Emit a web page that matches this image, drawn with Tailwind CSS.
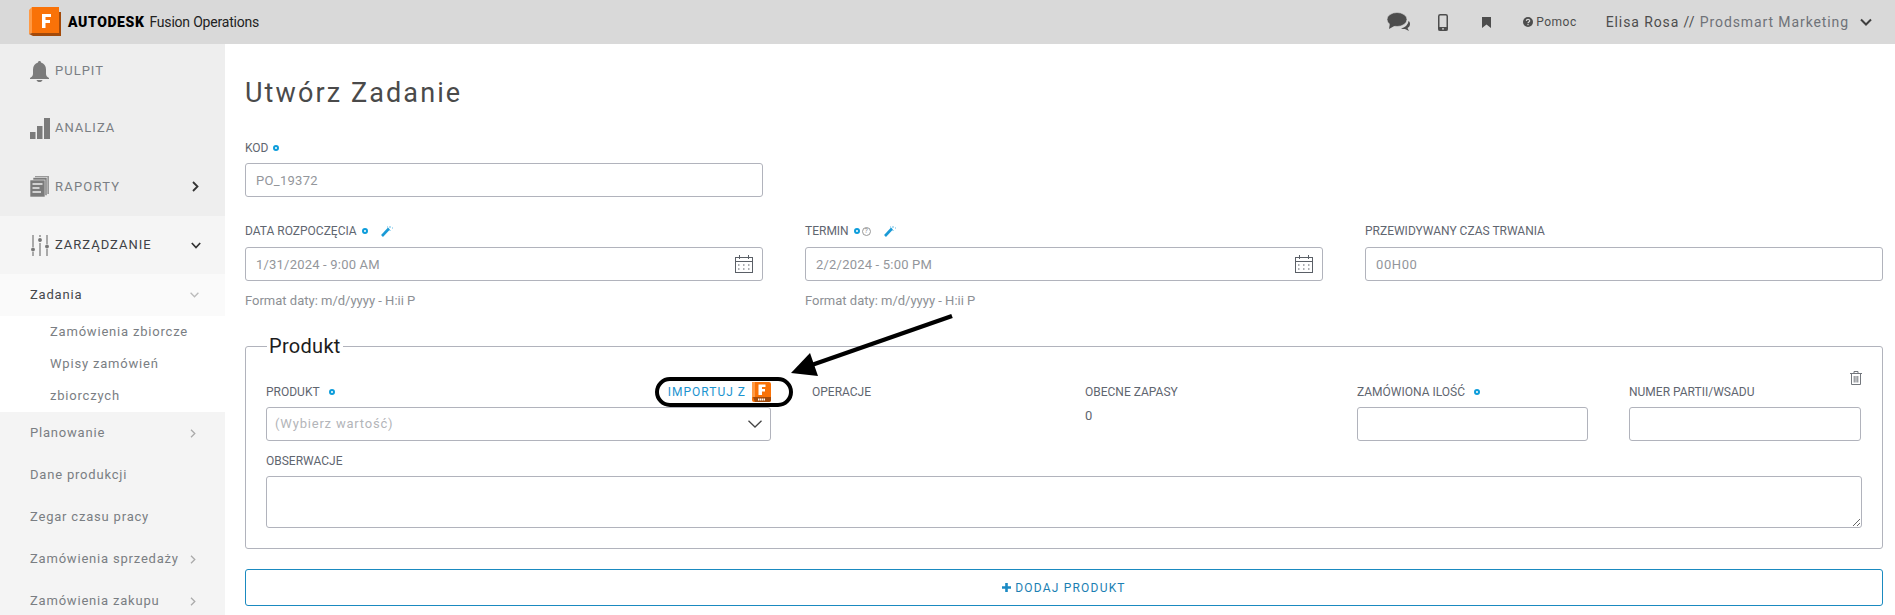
<!DOCTYPE html>
<html lang="pl">
<head>
    <meta charset="UTF-8">
    <title>Utwórz Zadanie</title>
    <script src="https://cdn.jsdelivr.net/npm/@tailwindcss/browser@4"></script>
</head>
<body class="relative h-[615px] overflow-hidden bg-white font-['Roboto',sans-serif] text-[#5f6670]">
    <!-- Top bar -->
    <header class="flex h-[44px] items-center bg-[#d9d9d9] pl-[29px] pr-[23px]">
        <svg class="h-[30px] w-[33px]" viewBox="0 0 33 30">
            <path d="M0 3 L3 0 L3 26 L0 27 Z" fill="#ff9a45"/>
            <path d="M0 27 L3 26 L32 26 L32 29 L4 29 Z" fill="#a34a0a"/>
            <rect x="3" y="0" width="27" height="26" fill="#f97208"/>
            <rect x="30" y="5" width="2" height="22" fill="#a34a0a"/>
            <path d="M13 7 H22 V10 H16.5 V13 H21 V16 H16.5 V21 H13 Z" fill="#fff"/>
        </svg>
        <span class="ml-[6px] text-[14px] font-black leading-none tracking-[0.6px] text-black">AUTODESK</span>
        <span class="ml-[5px] text-[14px] leading-none text-[#222] tracking-[-0.2px]">Fusion Operations</span>
        <div class="ml-auto flex items-center">
            <svg class="h-[20px] w-[24px]" viewBox="0 0 24 20" fill="#4d4d4d">
                <path d="M23 12c0 2-1 3-2.500 4l1.500 3-4-2c-1 0-3 0-4-.5 4-1 7-3.500 7.500-7.500 1 .5 1.500 1.800 1.500 3z"/>
                <ellipse cx="10" cy="7.500" rx="10" ry="7" stroke="#d9d9d9" stroke-width="0.600"/>
                <path d="M3 11 L2 17 L9 13 Z"/>
            </svg>
            <svg class="ml-[27px] h-[17px] w-[10px]" viewBox="0 0 10 17">
                <rect x="0.750" y="0.750" width="8.500" height="15.500" rx="1.500" fill="none" stroke="#4d4d4d" stroke-width="1.500"/>
                <rect x="0.500" y="13" width="9" height="3.500" fill="#4d4d4d"/>
                <circle cx="5" cy="14.800" r="0.900" fill="#d9d9d9"/>
            </svg>
            <svg class="ml-[34px] h-[11px] w-[9px]" viewBox="0 0 9 11" fill="#4d4d4d"><path d="M0 0H9V11L4.500 7.500 0 11Z"/></svg>
            <svg class="ml-[32px] h-[10px] w-[10px]" viewBox="0 0 10 10">
                <circle cx="5" cy="5" r="5" fill="#4d4d4d"/>
                <path d="M3.300 3.900C3.400 2 6.700 2 6.700 3.800 6.700 5 5 5 5 6.200" fill="none" stroke="#d9d9d9" stroke-width="1.200"/>
                <rect x="4.400" y="7" width="1.200" height="1.200" fill="#d9d9d9"/>
            </svg>
            <span class="ml-[3px] text-[12px] tracking-[0.5px] text-[#4d4d4d]">Pomoc</span>
            <span class="ml-[29px] text-[14px] tracking-[0.9px] text-[#4d4d4d]">Elisa Rosa // <span class="text-[#6f7278]">Prodsmart Marketing</span></span>
            <svg class="ml-[11px] h-[8px] w-[12px]" viewBox="0 0 12 8" fill="none" stroke="#3f3f3f" stroke-width="2"><path d="M1 1.500 6 6.500 11 1.500"/></svg>
        </div>
    </header>

    <div class="flex h-[571px]">
        <!-- Sidebar -->
        <nav class="w-[225px] shrink-0 bg-[#f4f4f4] text-[13px] tracking-[0.8px]">
            <div class="bg-[#eeeeee] text-[#7a7e83]">
                <a class="flex h-[54px] items-center pl-[30px] tracking-[1px]">
                    <svg class="h-[21px] w-[19px]" viewBox="0 0 19 21" fill="#7b7b7b">
                        <path d="M9.500 0C10.500 0 11 .6 11 1.500 14 2.300 16 5 16 8.500V13C16 15 17.500 16 19 17V18H0V17C1.500 16 3 15 3 13V8.500C3 5 5 2.300 8 1.500 8 .6 8.500 0 9.500 0Z"/>
                        <path d="M6.500 19H12.500C12 20.500 11 21 9.500 21S7 20.500 6.500 19Z"/>
                    </svg>
                    <span class="ml-[6px]">PULPIT</span>
                </a>
                <a class="flex h-[60px] items-center pl-[30px] tracking-[1px]">
                    <svg class="h-[21px] w-[20px]" viewBox="0 0 20 21" fill="#7b7b7b">
                        <rect x="0" y="14" width="5.500" height="7"/><rect x="7" y="8" width="5.500" height="13"/><rect x="14" y="0" width="6" height="21"/>
                    </svg>
                    <span class="ml-[5px]">ANALIZA</span>
                </a>
                <a class="flex h-[58px] items-center pb-[1px] pl-[30px] pr-[26px] tracking-[1.2px]">
                    <svg class="h-[21px] w-[19px]" viewBox="0 0 19 21">
                        <rect x="5" y="0" width="14" height="18" fill="#999"/>
                        <rect x="3" y="1.500" width="14" height="18" fill="#7b7b7b" stroke="#eee" stroke-width="0.600"/>
                        <rect x="0" y="4" width="15" height="17" fill="#7b7b7b" stroke="#eee" stroke-width="0.600"/>
                        <path d="M2.500 8H12.500M2.500 12H9.500M2.500 16H11" stroke="#eee" stroke-width="1.400"/>
                    </svg>
                    <span class="ml-[6px]">RAPORTY</span>
                    <svg class="ml-auto h-[11px] w-[7px]" viewBox="0 0 7 11" fill="none" stroke="#333" stroke-width="1.800"><path d="M1 1 5.500 5.500 1 10"/></svg>
                </a>
            </div>
            <a class="flex h-[58px] items-center bg-[#f5f5f5] pl-[31px] pr-[24px] text-[#3f4246] tracking-[1px]">
                <svg class="h-[21px] w-[18px]" viewBox="0 0 18 21" stroke="#777" stroke-width="1.200" fill="#777">
                    <path d="M2 0V12M2 17V21M9 0V2M9 8V21M16 0V9M16 14V21"/>
                    <circle cx="2" cy="14.500" r="1.300"/><circle cx="9" cy="5" r="1.300"/><circle cx="16" cy="11.500" r="1.300"/>
                </svg>
                <span class="ml-[6px]">ZARZĄDZANIE</span>
                <svg class="ml-auto h-[7px] w-[10px]" viewBox="0 0 10 7" fill="none" stroke="#333" stroke-width="1.700"><path d="M.8 1 5 5.500 9.200 1"/></svg>
            </a>
            <a class="flex h-[42px] items-center bg-[#fafafa] pl-[30px] pr-[26px] text-[#45484c]">
                <span>Zadania</span>
                <svg class="ml-auto h-[6px] w-[9px]" viewBox="0 0 9 6" fill="none" stroke="#bbb" stroke-width="1.300"><path d="M.6.8 4.500 4.800 8.400.8"/></svg>
            </a>
            <div class="bg-white pl-[50px] text-[#7a7e83]">
                <a class="flex h-[32px] items-center">Zamówienia zbiorcze</a>
                <a class="flex h-[32px] items-center">Wpisy zamówień</a>
                <a class="flex h-[32px] items-center">zbiorczych</a>
            </div>
            <div class="text-[#7a7e83]">
                <a class="flex h-[42px] items-center pl-[30px] pr-[29px]">Planowanie
                    <svg class="ml-auto h-[9px] w-[6px]" viewBox="0 0 6 9" fill="none" stroke="#aaa" stroke-width="1.300"><path d="M1 .7 4.800 4.500 1 8.300"/></svg>
                </a>
                <a class="flex h-[42px] items-center pl-[30px]">Dane produkcji</a>
                <a class="flex h-[42px] items-center pl-[30px]">Zegar czasu pracy</a>
                <a class="flex h-[42px] items-center pl-[30px] pr-[29px]">Zamówienia sprzedaży
                    <svg class="ml-auto h-[9px] w-[6px]" viewBox="0 0 6 9" fill="none" stroke="#aaa" stroke-width="1.300"><path d="M1 .7 4.800 4.500 1 8.300"/></svg>
                </a>
                <a class="flex h-[42px] items-center pl-[30px] pr-[29px]">Zamówienia zakupu
                    <svg class="ml-auto h-[9px] w-[6px]" viewBox="0 0 6 9" fill="none" stroke="#aaa" stroke-width="1.300"><path d="M1 .7 4.800 4.500 1 8.300"/></svg>
                </a>
            </div>
        </nav>

        <!-- Main -->
        <main class="flex-1 pl-[20px] pr-[12px]">
            <h1 class="mt-[31px] h-[36px] text-[27px] leading-[36px] tracking-[2.1px] text-[#4a4a4a]">Utwórz Zadanie</h1>

            <label class="mt-[29px] flex h-[16px] items-center text-[12px] text-[#5f6670]">KOD
                <span class="ml-[5px] h-[6px] w-[6px] rounded-full border-[2px] border-[#0d9ddb]"></span>
            </label>
            <input value="PO_19372" class="mt-[7px] block h-[34px] w-[518px] rounded-[3px] border border-[#b1b3bc] px-[10px] text-[13px] tracking-[0.3px] text-[#93969b] outline-none">

            <div class="mt-[26px] grid grid-cols-[518px_518px_1fr] gap-x-[42px]">
                <div>
                    <label class="flex h-[16px] items-center text-[12px]">DATA ROZPOCZĘCIA
                        <span class="ml-[5px] h-[6px] w-[6px] rounded-full border-[2px] border-[#0d9ddb]"></span>
                        <svg class="ml-[13px] h-[12px] w-[12px]" viewBox="0 0 12 12"><path d="M1 11 8 3.500" stroke="#1a9ad6" stroke-width="2.600"/><path d="M9 1V3M9 5V6M11 3H12M6 2H7" stroke="#66bde6"/></svg>
                    </label>
                    <div class="relative mt-[8px]">
                        <input value="1/31/2024 - 9:00 AM" class="block h-[34px] w-full rounded-[3px] border border-[#b1b3bc] px-[10px] text-[13px] tracking-[0.2px] text-[#93969b] outline-none">
                        <svg class="absolute right-[10px] top-[8px] h-[18px] w-[18px]" viewBox="0 0 18 18" fill="none" stroke="#5a5f66">
                            <rect x="0.500" y="2.500" width="17" height="15"/><path d="M0.500 6.500H17.500M4.500 0V4M13.500 0V4"/>
                            <path d="M3 10H5M8 10H10M13 10H15M3 14H5M8 14H10M13 14H15" stroke-dasharray="1.500 .5"/>
                        </svg>
                    </div>
                    <p class="mt-[12px] text-[13px] leading-[16px] text-[#8d9095]">Format daty: m/d/yyyy - H:ii P</p>
                </div>
                <div>
                    <label class="flex h-[16px] items-center text-[12px]">TERMIN
                        <span class="ml-[5px] h-[6px] w-[6px] rounded-full border-[2px] border-[#0d9ddb]"></span>
                        <span class="ml-[2px] flex h-[9px] w-[9px] items-center justify-center rounded-full border border-[#999] text-[7px] leading-none text-[#888]">?</span>
                        <svg class="ml-[13px] h-[12px] w-[12px]" viewBox="0 0 12 12"><path d="M1 11 8 3.500" stroke="#1a9ad6" stroke-width="2.600"/><path d="M9 1V3M9 5V6M11 3H12M6 2H7" stroke="#66bde6"/></svg>
                    </label>
                    <div class="relative mt-[8px]">
                        <input value="2/2/2024 - 5:00 PM" class="block h-[34px] w-full rounded-[3px] border border-[#b1b3bc] px-[10px] text-[13px] tracking-[0.2px] text-[#93969b] outline-none">
                        <svg class="absolute right-[10px] top-[8px] h-[18px] w-[18px]" viewBox="0 0 18 18" fill="none" stroke="#5a5f66">
                            <rect x="0.500" y="2.500" width="17" height="15"/><path d="M0.500 6.500H17.500M4.500 0V4M13.500 0V4"/>
                            <path d="M3 10H5M8 10H10M13 10H15M3 14H5M8 14H10M13 14H15" stroke-dasharray="1.500 .5"/>
                        </svg>
                    </div>
                    <p class="mt-[12px] text-[13px] leading-[16px] text-[#8d9095]">Format daty: m/d/yyyy - H:ii P</p>
                </div>
                <div>
                    <label class="flex h-[16px] items-center text-[12px]">PRZEWIDYWANY CZAS TRWANIA</label>
                    <input value="00H00" class="mt-[8px] block h-[34px] w-full rounded-[3px] border border-[#b1b3bc] px-[10px] text-[13px] tracking-[0.6px] text-[#93969b] outline-none">
                </div>
            </div>

            <!-- Product box -->
            <fieldset class="relative mt-[26px] h-[214px] rounded-[3px] border border-[#b1b3bc] px-[20px] pt-[27px]">
                <legend class="ml-[1px] px-[2px] text-[20px] leading-[22px] tracking-[0.3px] text-[#1c1c1c]">Produkt</legend>
                <svg class="absolute right-[20px] top-[14px] h-[14px] w-[12px]" viewBox="0 0 12 14" fill="none" stroke="#73777d">
                    <path d="M0 2.500H12M4 2.500V.5H8V2.500M1.500 2.500V13.500H10.500V2.500M4.200 5V11.500M6 5V11.500M7.800 5V11.500"/>
                </svg>
                <div class="grid grid-cols-[505px_232px_231px_231px_232px] gap-x-[41px]">
                    <div>
                        <div class="flex h-[16px] items-center text-[12px]">PRODUKT
                            <span class="ml-[9px] h-[6px] w-[6px] rounded-full border-[2px] border-[#0d9ddb]"></span>
                            <span class="ml-auto flex items-center text-[12px] tracking-[1px] text-[#1b93cf]">IMPORTUJ Z
                                <svg class="ml-[6px] h-[20px] w-[19px]" viewBox="0 0 19 20">
                                    <rect width="19" height="20" rx="2" fill="#f97208"/>
                                    <rect width="3" height="15" fill="#ff9a45"/>
                                    <path d="M1 15H19V18A2 2 0 0 1 17 20H3Z" fill="#a34a0a"/>
                                    <path d="M6.500 2.500H13.500V5H10V7H13V9.500H10V13H6.500Z" fill="#fff"/>
                                    <path d="M6 17.500H13" stroke="#fff" stroke-width="2" stroke-dasharray="1.500 .5"/>
                                </svg>
                            </span>
                        </div>
                        <div class="mt-[7px] flex h-[34px] items-center rounded-[3px] border border-[#b1b3bc] px-[8px] text-[13px] tracking-[0.8px] text-[#b3b5b9]">(Wybierz wartość)
                            <svg class="ml-auto h-[8px] w-[14px]" viewBox="0 0 14 8" fill="none" stroke="#444" stroke-width="1.300"><path d="M.5.7 7 7 13.500.7"/></svg>
                        </div>
                    </div>
                    <div><div class="flex h-[16px] items-center text-[12px]">OPERACJE</div></div>
                    <div>
                        <div class="flex h-[16px] items-center text-[12px]">OBECNE ZAPASY</div>
                        <p class="mt-[6px] text-[13px] leading-[20px] text-[#5f6670]">0</p>
                    </div>
                    <div>
                        <div class="flex h-[16px] items-center text-[12px]">ZAMÓWIONA ILOŚĆ
                            <span class="ml-[9px] h-[6px] w-[6px] rounded-full border-[2px] border-[#0d9ddb]"></span>
                        </div>
                        <input class="mt-[7px] block h-[34px] w-full rounded-[3px] border border-[#b1b3bc] outline-none">
                    </div>
                    <div>
                        <div class="flex h-[16px] items-center text-[12px]">NUMER PARTII/WSADU</div>
                        <input class="mt-[7px] block h-[34px] w-full rounded-[3px] border border-[#b1b3bc] outline-none">
                    </div>
                </div>
                <div class="mt-[12px] flex h-[16px] items-center text-[12px]">OBSERWACJE</div>
                <textarea class="mt-[7px] block h-[52px] w-full rounded-[3px] border border-[#b1b3bc] outline-none"></textarea>
            </fieldset>

            <button class="mt-[20px] flex h-[37px] w-full items-center justify-center rounded-[3px] border border-[#1a8ac0] text-[12px] tracking-[1.2px] text-[#1b7fb3]">
                <svg class="mr-[4px] h-[9px] w-[9px]" viewBox="0 0 9 9" fill="#1b8ac4"><path d="M3.200 0H5.800V3.200H9V5.800H5.800V9H3.200V5.800H0V3.200H3.200Z"/></svg>
                DODAJ PRODUKT
            </button>
        </main>
    </div>

    <!-- Annotation drawn over the screenshot -->
    <svg class="pointer-events-none absolute left-[650px] top-[310px] h-[105px] w-[310px]" viewBox="650 310 310 105" fill="none">
        <rect x="657" y="379" width="134" height="26" rx="13" stroke="#000" stroke-width="4"/>
        <path d="M952 316 L806 367" stroke="#000" stroke-width="4.500"/>
        <path d="M791 373 L810 353 L818 376 Z" fill="#000"/>
    </svg>
</body>
</html>
